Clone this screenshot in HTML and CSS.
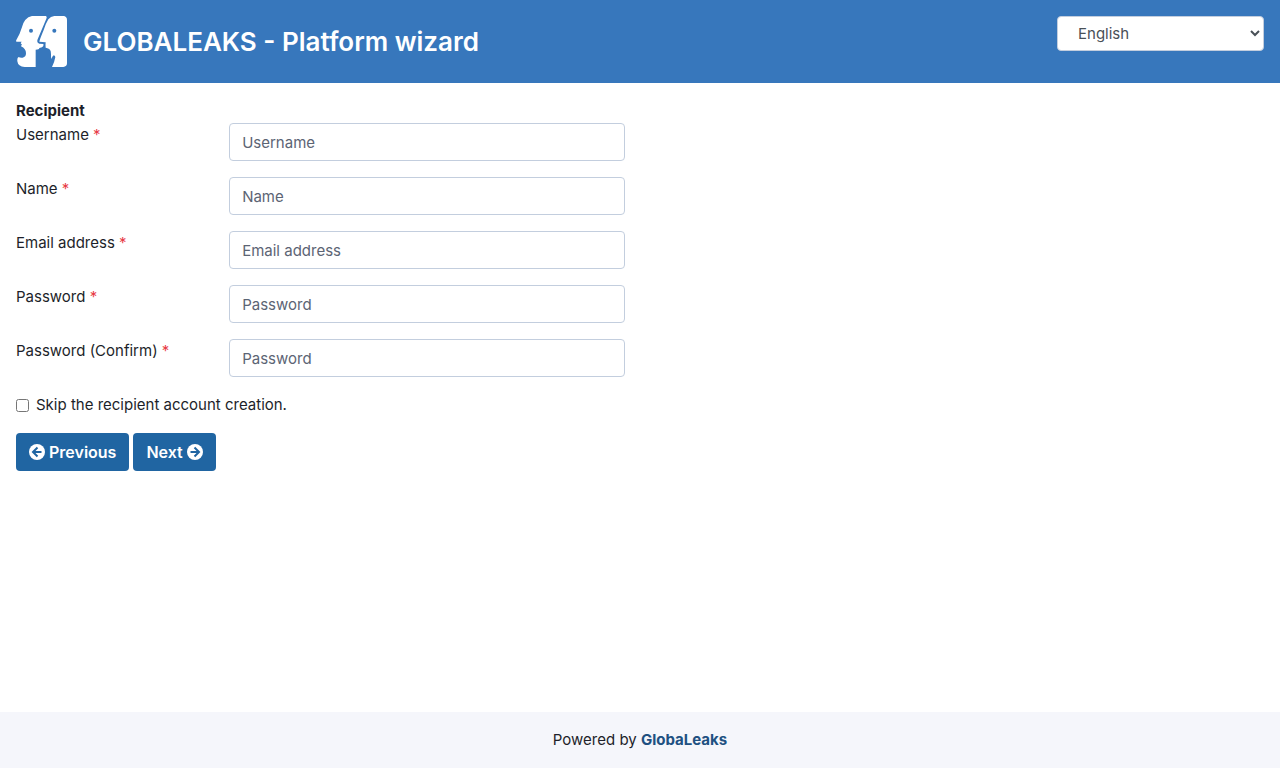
FILE: index.html
```html
<!DOCTYPE html>
<html lang="en">
<head>
<meta charset="utf-8">
<meta name="viewport" content="width=device-width, initial-scale=1">
<title>GLOBALEAKS - Platform wizard</title>
<link rel="stylesheet" href="styles.css">
</head>
<body>
<header class="header">
  <svg class="logo" viewBox="48 48 153 153" role="img" aria-label="GlobaLeaks logo">
    <path fill="#fff" d="M96 48H137Q142 50 139 56L113 118Q109 128 118 131L130 132Q132 139 126 142L118 144Q118 149 107 149V201H74Q54 200 52 184Q51 172 56 171Q60 174 68 173Q78 171 78 160Q78 146 63 139Q63 136 66 134L62 130L65 125H50Q47 124 49 120Q60 102 65 84Q72 53 96 48Z"/>
    <path fill="#fff" d="M163 48H190Q201 49 201 60V190Q201 200 190 201H156Q163 188 166 171Q165 166 161 166Q156 169 155 177Q152 172 153 163Q153 153 150 149Q146 144 137 143Q136 136 137 127Q128 125 118 125Q119 119 131 90Q138 69 145 58Q152 49 163 48Z"/>
    <circle cx="93" cy="92" r="6" fill="#3777bc"/>
    <circle cx="163" cy="92" r="6" fill="#3777bc"/>
  </svg>
  <h1 class="title">GLOBALEAKS - Platform wizard</h1>
  <select class="language" aria-label="Language"><option>English</option></select>
</header>
<main class="content">
  <form class="wizard">
    <h2 class="section-title">Recipient</h2>
    <div class="field">
      <label for="username">Username <span class="required">*</span></label>
      <input class="text-input" id="username" type="text" placeholder="Username">
    </div>
    <div class="field">
      <label for="name">Name <span class="required">*</span></label>
      <input class="text-input" id="name" type="text" placeholder="Name">
    </div>
    <div class="field">
      <label for="email">Email address <span class="required">*</span></label>
      <input class="text-input" id="email" type="email" placeholder="Email address">
    </div>
    <div class="field">
      <label for="password">Password <span class="required">*</span></label>
      <input class="text-input" id="password" type="password" placeholder="Password">
    </div>
    <div class="field">
      <label for="confirm">Password (Confirm) <span class="required">*</span></label>
      <input class="text-input" id="confirm" type="password" placeholder="Password">
    </div>
    <div class="skip">
      <input class="checkbox" id="skip" type="checkbox">
      <label for="skip">Skip the recipient account creation.</label>
    </div>
    <div class="actions">
      <button class="button" type="button">
        <svg class="icon" viewBox="0 0 16 16" aria-hidden="true"><circle cx="8" cy="8" r="8" fill="#fff"/><path d="M8.5 3.5L4 8L8.5 12.5M4 8H12.5" fill="none" stroke="#2065a2" stroke-width="2"/></svg>
        Previous
      </button>
      <button class="button" type="button">
        Next
        <svg class="icon" viewBox="0 0 16 16" aria-hidden="true"><circle cx="8" cy="8" r="8" fill="#fff"/><path d="M7.5 3.5L12 8L7.5 12.5M12 8H3.5" fill="none" stroke="#2065a2" stroke-width="2"/></svg>
      </button>
    </div>
  </form>
</main>
<footer class="footer"><span>Powered by <a class="footer-link" href="#">GlobaLeaks</a></span></footer>
</body>
</html>
```
FILE: styles.css
```css
* {
  box-sizing: border-box;
}

body {
  margin: 0;
  min-height: 100vh;
  display: flex;
  flex-direction: column;
  background: #fff;
  color: #1d1f2a;
  font: 400 15px/24px Inter, "Liberation Sans", sans-serif;
}

.header {
  display: flex;
  align-items: center;
  gap: 16px;
  padding: 16px;
  background: #3777bc;
  color: #fff;
}

.logo {
  width: 51px;
  height: 51px;
  flex: none;
}

.title {
  margin: 0;
  font-size: 26px;
  line-height: 32px;
  font-weight: 600;
}

.language {
  align-self: flex-start;
  width: 207px;
  height: 35px;
  margin-left: auto;
  padding: 0 0 0 16px;
  border: 1px solid #c3cede;
  border-radius: 4px;
  background: #fff;
  color: #495057;
  font: inherit;
}

.content {
  flex: 1;
  padding: 16px;
}

.section-title {
  margin: 0;
  font-size: 15px;
  line-height: 24px;
  font-weight: 700;
}

.field {
  display: grid;
  grid-template-columns: 35% 65%;
  max-width: 609px;
  margin-bottom: 16px;
}

.required {
  color: #e83b46;
}

.text-input {
  width: 100%;
  height: 38px;
  padding: 6px 12px;
  border: 1px solid #c3cede;
  border-radius: 4px;
  background: #fff;
  color: #495057;
  font: inherit;
}

.text-input::placeholder {
  color: #5c6474;
  opacity: 1;
}

.skip {
  display: flex;
  align-items: center;
  gap: 7px;
  margin-bottom: 16px;
}

.checkbox {
  width: 13px;
  height: 13px;
  margin: 0;
}

.actions {
  display: flex;
  gap: 4px;
}

.button {
  display: flex;
  align-items: center;
  gap: 4px;
  height: 38px;
  padding: 0 13px;
  border: 0;
  border-radius: 4px;
  background: #2065a2;
  color: #fff;
  font: inherit;
  font-size: 16px;
  font-weight: 600;
}

.icon {
  width: 16px;
  height: 16px;
}

.footer {
  padding: 16px;
  background: #f5f6fb;
  text-align: center;
}

.footer-link {
  color: #205081;
  font-weight: 700;
  text-decoration: none;
}
```
